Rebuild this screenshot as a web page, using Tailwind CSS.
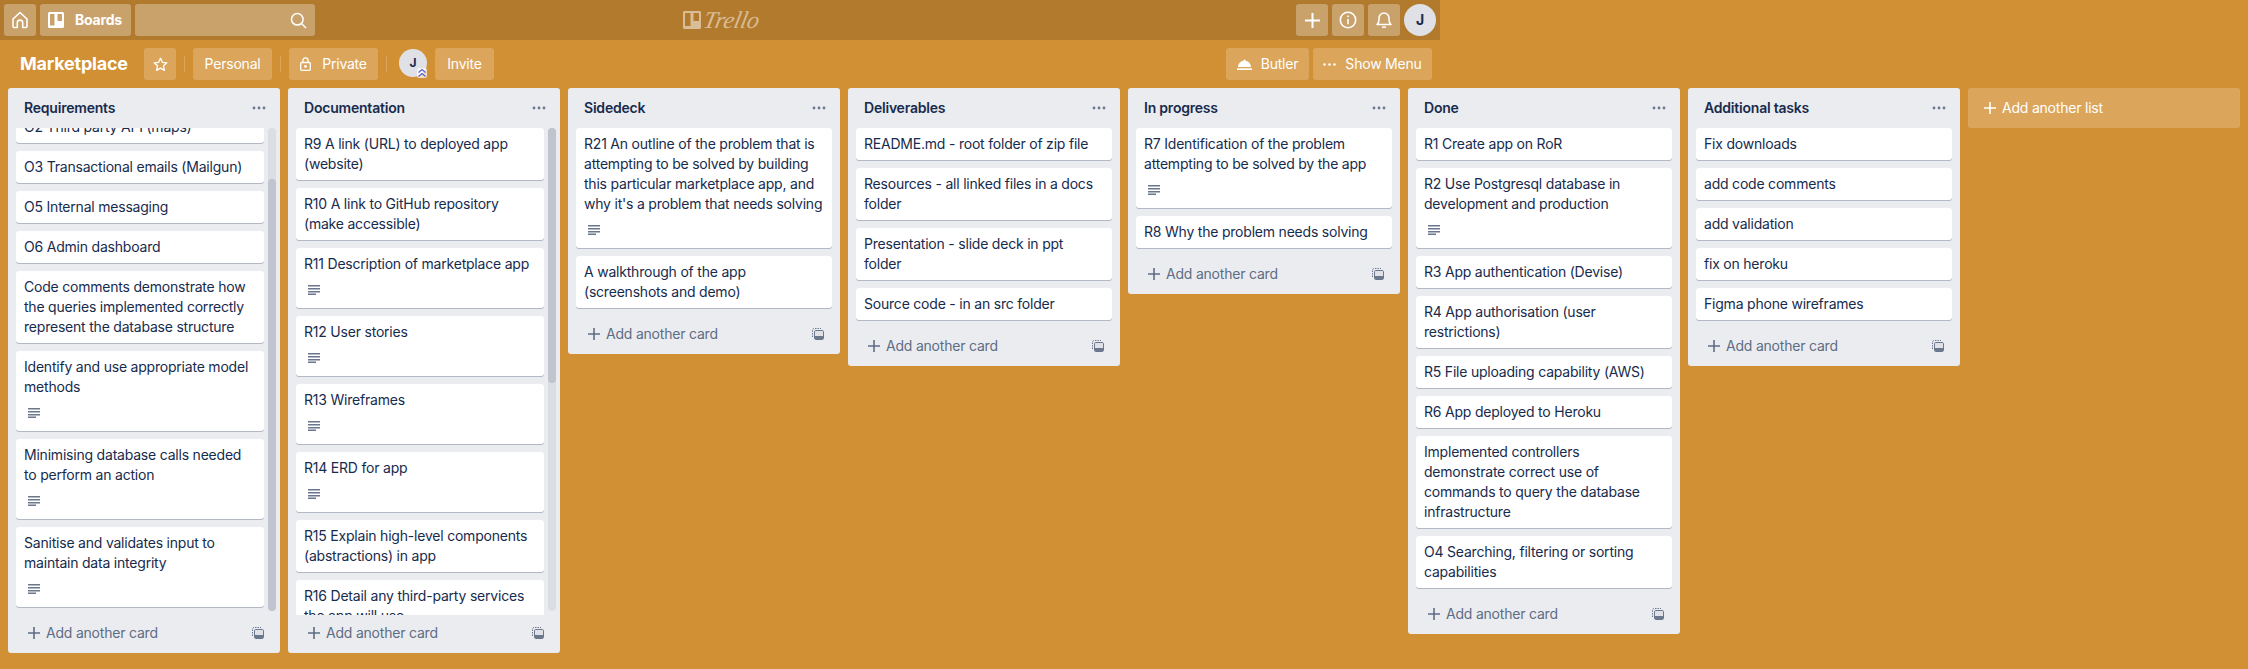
<!DOCTYPE html>
<html lang="en">
<head>
  <meta charset="UTF-8" />
  <title>Marketplace | Trello</title>
  <script src="https://cdn.jsdelivr.net/npm/@tailwindcss/browser@4"></script>
</head>
<body class="h-[669px] overflow-hidden bg-[#d29034] font-['Inter',sans-serif] text-sm leading-5 tracking-[-0.21px] text-[#172b4d]">

  <!-- shared icons -->
  <svg class="hidden">
    <symbol id="desc" viewBox="0 0 12 10"><path d="M0 .75h12M0 3.75h12M0 6.75h12M0 9.25h8" stroke="#6b778c" stroke-width="1.4" fill="none"/></symbol>
    <symbol id="dots" viewBox="0 0 14 4"><circle cx="2" cy="2" r="1.4" fill="#6b778c"/><circle cx="7" cy="2" r="1.4" fill="#6b778c"/><circle cx="12" cy="2" r="1.4" fill="#6b778c"/></symbol>
    <symbol id="plus" viewBox="0 0 12 12"><path d="M6 0v12M0 6h12" stroke="currentColor" stroke-width="1.6" fill="none"/></symbol>
    <symbol id="template" viewBox="0 0 12 12"><path d="M.5 9V2.2A1.7 1.7 0 0 1 2.2.5H9" stroke="#6b778c" stroke-width="1" stroke-dasharray="1.5 1" fill="none"/><rect x="2.5" y="2.5" width="9" height="9" rx="1.2" fill="#dfe1e6" stroke="#6b778c" stroke-width="1"/><rect x="3" y="8" width="8" height="3" fill="#6b778c"/></symbol>
  </svg>

  <header class="flex h-10 w-[1440px] items-center gap-1 bg-[#b27a2c] px-1 text-white">
    <a class="flex h-8 w-8 items-center justify-center rounded-[3px] bg-white/30">
      <svg class="h-[18px] w-[18px]" viewBox="0 0 18 18" fill="none" stroke="white" stroke-width="1.6" stroke-linejoin="round"><path d="M2 8 9 1.5 16 8v7.2a1.3 1.3 0 0 1-1.3 1.3h-3v-4.7a2.7 2.7 0 0 0-5.4 0v4.7h-3A1.3 1.3 0 0 1 2 15.2Z"/></svg>
    </a>
    <a class="flex h-8 w-[91px] items-center rounded-[3px] bg-white/30 pl-2 font-bold">
      <svg class="mr-[11px] h-4 w-4" viewBox="0 0 16 16"><path fill="white" fill-rule="evenodd" d="M1.5 0h13A1.5 1.5 0 0 1 16 1.500v13a1.500 1.500 0 0 1-1.500 1.500h-13A1.500 1.500 0 0 1 0 14.500v-13A1.500 1.500 0 0 1 1.500 0ZM2 2v11.500h4.500V2Zm7.500 0v7H14V2Z"/></svg>
      Boards
    </a>
    <div class="flex h-8 w-[180px] items-center justify-end rounded-[3px] bg-white/30 pr-[8px]">
      <svg class="h-[17px] w-[17px]" viewBox="0 0 17 17" fill="none" stroke="white" stroke-width="1.5"><circle cx="7.300" cy="7.300" r="5.800"/><path d="m11.500 11.500 4.500 4.500"/></svg>
    </div>
    <div class="ml-[364px] flex h-[18px] w-[74px] items-center gap-[3px] text-white/50">
      <svg class="h-[18px] w-[18px] shrink-0" viewBox="0 0 18 18"><path fill="currentColor" fill-rule="evenodd" d="M1.500 0h15A1.500 1.500 0 0 1 18 1.500v15a1.500 1.500 0 0 1-1.500 1.500h-15A1.500 1.500 0 0 1 0 16.500v-15A1.500 1.500 0 0 1 1.500 0ZM2 2v13h5.500V2Zm8.500 0v8H16V2Z"/></svg>
      <span class="-skew-x-12 font-['Liberation_Serif',serif] text-[24px] leading-[18px] italic">Trello</span>
    </div>
    <a class="ml-auto flex h-8 w-8 items-center justify-center rounded-[3px] bg-white/30">
      <svg class="h-[15px] w-[15px] text-white" viewBox="0 0 12 12"><use href="#plus"/></svg>
    </a>
    <a class="flex h-8 w-8 items-center justify-center rounded-[3px] bg-white/30">
      <svg class="h-[18px] w-[18px]" viewBox="0 0 18 18" fill="none" stroke="white" stroke-width="1.600"><circle cx="9" cy="9" r="7.700"/><path d="M9 8v5.200M9 4.500v1.800"/></svg>
    </a>
    <a class="flex h-8 w-8 items-center justify-center rounded-[3px] bg-white/30">
      <svg class="h-[18px] w-[16px]" viewBox="0 0 16 18" fill="none" stroke="white" stroke-width="1.500" stroke-linejoin="round"><path d="M1 13.500c1.300-1.200 2-2.300 2-4.500V7a5 5 0 0 1 10 0v2c0 2.200.7 3.300 2 4.500Z"/><path d="M6 16.200h4"/></svg>
    </a>
    <div class="flex h-8 w-8 items-center justify-center rounded-full bg-[#dfe1e6] font-bold text-[#172b4d]">J</div>
  </header>

  <div class="flex h-[48px] items-start pt-2 text-white">
    <div class="flex w-[1440px] items-center">
      <h1 class="ml-5 w-[124px] text-lg leading-8 font-bold">Marketplace</h1>
      <a class="flex h-8 w-8 items-center justify-center rounded-[3px] bg-white/20">
        <svg class="h-[15px] w-[15px]" viewBox="0 0 16 16" fill="none" stroke="white" stroke-width="1.400" stroke-linejoin="round"><path d="m8 1.300 2 4.400 4.800.5-3.600 3.200 1 4.800L8 11.800l-4.200 2.400 1-4.800L1.200 6.200 6 5.700Z"/></svg>
      </a>
      <span class="mx-2 h-4 w-px bg-white/20"></span>
      <a class="flex h-8 w-[79px] items-center justify-center rounded-[3px] bg-white/20">Personal</a>
      <span class="mx-2 h-4 w-px bg-white/20"></span>
      <a class="flex h-8 w-[89px] items-center justify-center gap-[11px] rounded-[3px] bg-white/20">
        <svg class="h-[14px] w-[11px]" viewBox="0 0 11 14" fill="none" stroke="white" stroke-width="1.300"><rect x=".7" y="5.500" width="9.600" height="7.800" rx="1"/><path d="M3 5.500V3.300a2.500 2.500 0 0 1 5 0v2.200"/><circle cx="5.500" cy="9.400" r=".8" fill="white"/></svg>
        Private
      </a>
      <span class="mx-2 h-4 w-px bg-white/20"></span>
      <div class="relative mt-[-2px] ml-1 flex h-7 w-7 items-center justify-center rounded-full bg-[#dfe1e6] text-xs font-bold text-[#172b4d]">
        J
        <svg class="absolute right-0 bottom-[-1px] h-[10px] w-[10px] rounded-[2px] bg-white/70" viewBox="0 0 10 10" fill="none" stroke="#5a61c9" stroke-width="1.200"><path d="m1.500 4.500 3.500-3 3.500 3M1.500 8.500l3.500-3 3.500 3"/></svg>
      </div>
      <a class="ml-2 flex h-8 w-[59px] items-center justify-center rounded-[3px] bg-white/20">Invite</a>
      <a class="ml-auto flex h-8 w-[83px] items-center justify-center gap-[9px] rounded-[3px] bg-white/20">
        <svg class="h-[14px] w-[15px]" viewBox="0 0 15 14" fill="white"><path d="M1 10a6.500 6.500 0 0 1 5.800-6.400V2.500h1.400v1.100A6.500 6.500 0 0 1 14 10Z"/><path d="M0 11.300h15V13H0Z"/></svg>
        Butler
      </a>
      <a class="mr-2 ml-1 flex h-8 w-[119px] items-center justify-center gap-[9px] rounded-[3px] bg-white/20">
        <svg class="h-[3px] w-[13px]" viewBox="0 0 13 3" fill="white"><circle cx="1.500" cy="1.500" r="1.200"/><circle cx="6.500" cy="1.500" r="1.200"/><circle cx="11.500" cy="1.500" r="1.200"/></svg>
        Show Menu
      </a>
    </div>
  </div>

  <main class="flex items-start gap-2 px-2">

    <section class="w-[272px] shrink-0 rounded-[3px] bg-[#ebecf0]">
      <div class="flex h-10 items-center justify-between pr-[14px] pl-4 font-semibold">
        <h2>Requirements</h2>
        <svg class="h-1 w-[14px]"><use href="#dots"/></svg>
      </div>
      <div class="relative h-[487px] overflow-hidden pl-2">
        <div class="mb-2 -mt-[17px] w-[248px] rounded-[3px] bg-white px-2 pt-[6px] pb-[6px] shadow-[0_1px_0_rgba(9,30,66,.25)]">O2 Third party API (maps)</div>
        <div class="mb-2 w-[248px] rounded-[3px] bg-white px-2 pt-[6px] pb-[6px] shadow-[0_1px_0_rgba(9,30,66,.25)]">O3 Transactional emails (Mailgun)</div>
        <div class="mb-2 w-[248px] rounded-[3px] bg-white px-2 pt-[6px] pb-[6px] shadow-[0_1px_0_rgba(9,30,66,.25)]">O5 Internal messaging</div>
        <div class="mb-2 w-[248px] rounded-[3px] bg-white px-2 pt-[6px] pb-[6px] shadow-[0_1px_0_rgba(9,30,66,.25)]">O6 Admin dashboard</div>
        <div class="mb-2 w-[248px] rounded-[3px] bg-white px-2 pt-[6px] pb-[6px] shadow-[0_1px_0_rgba(9,30,66,.25)]">Code comments demonstrate how the queries implemented correctly represent the database structure</div>
        <div class="mb-2 w-[248px] rounded-[3px] bg-white px-2 pt-[6px] shadow-[0_1px_0_rgba(9,30,66,.25)]">Identify and use appropriate model methods<div class="flex h-[34px] items-start pt-[11px] pl-1"><svg class="h-[10px] w-3"><use href="#desc"/></svg></div></div>
        <div class="mb-2 w-[248px] rounded-[3px] bg-white px-2 pt-[6px] shadow-[0_1px_0_rgba(9,30,66,.25)]">Minimising database calls needed to perform an action<div class="flex h-[34px] items-start pt-[11px] pl-1"><svg class="h-[10px] w-3"><use href="#desc"/></svg></div></div>
        <div class="mb-2 w-[248px] rounded-[3px] bg-white px-2 pt-[6px] shadow-[0_1px_0_rgba(9,30,66,.25)]">Sanitise and validates input to maintain data integrity<div class="flex h-[34px] items-start pt-[11px] pl-1"><svg class="h-[10px] w-3"><use href="#desc"/></svg></div></div>
        <div class="absolute top-0 right-1 h-[483px] w-2 rounded bg-[#dcdee5]">
          <div class="mt-[51px] h-[432px] rounded bg-[#bfc4ce]"></div>
        </div>
      </div>
      <div class="flex h-[38px] items-start justify-between pt-[8px] pr-4 pl-5 text-[#5e6c84]">
        <span class="flex items-center gap-[6px]"><svg class="h-3 w-3"><use href="#plus"/></svg>Add another card</span>
        <svg class="mt-1 h-3 w-3"><use href="#template"/></svg>
      </div>
    </section>

    <section class="w-[272px] shrink-0 rounded-[3px] bg-[#ebecf0]">
      <div class="flex h-10 items-center justify-between pr-[14px] pl-4 font-semibold">
        <h2>Documentation</h2>
        <svg class="h-1 w-[14px]"><use href="#dots"/></svg>
      </div>
      <div class="relative h-[487px] overflow-hidden pl-2">
        <div class="mb-2 w-[248px] rounded-[3px] bg-white px-2 pt-[6px] pb-[6px] shadow-[0_1px_0_rgba(9,30,66,.25)]">R9 A link (URL) to deployed app (website)</div>
        <div class="mb-2 w-[248px] rounded-[3px] bg-white px-2 pt-[6px] pb-[6px] shadow-[0_1px_0_rgba(9,30,66,.25)]">R10 A link to GitHub repository (make accessible)</div>
        <div class="mb-2 w-[248px] rounded-[3px] bg-white px-2 pt-[6px] shadow-[0_1px_0_rgba(9,30,66,.25)]">R11 Description of marketplace app<div class="flex h-[34px] items-start pt-[11px] pl-1"><svg class="h-[10px] w-3"><use href="#desc"/></svg></div></div>
        <div class="mb-2 w-[248px] rounded-[3px] bg-white px-2 pt-[6px] shadow-[0_1px_0_rgba(9,30,66,.25)]">R12 User stories<div class="flex h-[34px] items-start pt-[11px] pl-1"><svg class="h-[10px] w-3"><use href="#desc"/></svg></div></div>
        <div class="mb-2 w-[248px] rounded-[3px] bg-white px-2 pt-[6px] shadow-[0_1px_0_rgba(9,30,66,.25)]">R13 Wireframes<div class="flex h-[34px] items-start pt-[11px] pl-1"><svg class="h-[10px] w-3"><use href="#desc"/></svg></div></div>
        <div class="mb-2 w-[248px] rounded-[3px] bg-white px-2 pt-[6px] shadow-[0_1px_0_rgba(9,30,66,.25)]">R14 ERD for app<div class="flex h-[34px] items-start pt-[11px] pl-1"><svg class="h-[10px] w-3"><use href="#desc"/></svg></div></div>
        <div class="mb-2 w-[248px] rounded-[3px] bg-white px-2 pt-[6px] pb-[6px] shadow-[0_1px_0_rgba(9,30,66,.25)]">R15 Explain high-level components (abstractions) in app</div>
        <div class="mb-2 w-[248px] rounded-[3px] bg-white px-2 pt-[6px] pb-[6px] shadow-[0_1px_0_rgba(9,30,66,.25)]">R16 Detail any third-party services the app will use</div>
        <div class="absolute top-0 right-1 h-[483px] w-2 rounded bg-[#dcdee5]">
          <div class="h-[255px] rounded bg-[#bfc4ce]"></div>
        </div>
      </div>
      <div class="flex h-[38px] items-start justify-between pt-[8px] pr-4 pl-5 text-[#5e6c84]">
        <span class="flex items-center gap-[6px]"><svg class="h-3 w-3"><use href="#plus"/></svg>Add another card</span>
        <svg class="mt-1 h-3 w-3"><use href="#template"/></svg>
      </div>
    </section>

    <section class="w-[272px] shrink-0 rounded-[3px] bg-[#ebecf0]">
      <div class="flex h-10 items-center justify-between pr-[14px] pl-4 font-semibold">
        <h2>Sidedeck</h2>
        <svg class="h-1 w-[14px]"><use href="#dots"/></svg>
      </div>
      <div class="px-2">
        <div class="mb-2 rounded-[3px] bg-white px-2 pt-[6px] shadow-[0_1px_0_rgba(9,30,66,.25)]">R21 An outline of the problem that is attempting to be solved by building this particular marketplace app, and why it's a problem that needs solving<div class="flex h-[34px] items-start pt-[11px] pl-1"><svg class="h-[10px] w-3"><use href="#desc"/></svg></div></div>
        <div class="mb-2 rounded-[3px] bg-white px-2 pt-[6px] pb-[6px] shadow-[0_1px_0_rgba(9,30,66,.25)]">A walkthrough of the app (screenshots and demo)</div>
      </div>
      <div class="flex h-[38px] items-start justify-between pt-[8px] pr-4 pl-5 text-[#5e6c84]">
        <span class="flex items-center gap-[6px]"><svg class="h-3 w-3"><use href="#plus"/></svg>Add another card</span>
        <svg class="mt-1 h-3 w-3"><use href="#template"/></svg>
      </div>
    </section>

    <section class="w-[272px] shrink-0 rounded-[3px] bg-[#ebecf0]">
      <div class="flex h-10 items-center justify-between pr-[14px] pl-4 font-semibold">
        <h2>Deliverables</h2>
        <svg class="h-1 w-[14px]"><use href="#dots"/></svg>
      </div>
      <div class="px-2">
        <div class="mb-2 rounded-[3px] bg-white px-2 pt-[6px] pb-[6px] shadow-[0_1px_0_rgba(9,30,66,.25)]">README.md - root folder of zip file</div>
        <div class="mb-2 rounded-[3px] bg-white px-2 pt-[6px] pb-[6px] shadow-[0_1px_0_rgba(9,30,66,.25)]">Resources - all linked files in a docs folder</div>
        <div class="mb-2 rounded-[3px] bg-white px-2 pt-[6px] pb-[6px] shadow-[0_1px_0_rgba(9,30,66,.25)]">Presentation - slide deck in ppt folder</div>
        <div class="mb-2 rounded-[3px] bg-white px-2 pt-[6px] pb-[6px] shadow-[0_1px_0_rgba(9,30,66,.25)]">Source code - in an src folder</div>
      </div>
      <div class="flex h-[38px] items-start justify-between pt-[8px] pr-4 pl-5 text-[#5e6c84]">
        <span class="flex items-center gap-[6px]"><svg class="h-3 w-3"><use href="#plus"/></svg>Add another card</span>
        <svg class="mt-1 h-3 w-3"><use href="#template"/></svg>
      </div>
    </section>

    <section class="w-[272px] shrink-0 rounded-[3px] bg-[#ebecf0]">
      <div class="flex h-10 items-center justify-between pr-[14px] pl-4 font-semibold">
        <h2>In progress</h2>
        <svg class="h-1 w-[14px]"><use href="#dots"/></svg>
      </div>
      <div class="px-2">
        <div class="mb-2 rounded-[3px] bg-white px-2 pt-[6px] shadow-[0_1px_0_rgba(9,30,66,.25)]">R7 Identification of the problem attempting to be solved by the app<div class="flex h-[34px] items-start pt-[11px] pl-1"><svg class="h-[10px] w-3"><use href="#desc"/></svg></div></div>
        <div class="mb-2 rounded-[3px] bg-white px-2 pt-[6px] pb-[6px] shadow-[0_1px_0_rgba(9,30,66,.25)]">R8 Why the problem needs solving</div>
      </div>
      <div class="flex h-[38px] items-start justify-between pt-[8px] pr-4 pl-5 text-[#5e6c84]">
        <span class="flex items-center gap-[6px]"><svg class="h-3 w-3"><use href="#plus"/></svg>Add another card</span>
        <svg class="mt-1 h-3 w-3"><use href="#template"/></svg>
      </div>
    </section>

    <section class="w-[272px] shrink-0 rounded-[3px] bg-[#ebecf0]">
      <div class="flex h-10 items-center justify-between pr-[14px] pl-4 font-semibold">
        <h2>Done</h2>
        <svg class="h-1 w-[14px]"><use href="#dots"/></svg>
      </div>
      <div class="px-2">
        <div class="mb-2 rounded-[3px] bg-white px-2 pt-[6px] pb-[6px] shadow-[0_1px_0_rgba(9,30,66,.25)]">R1 Create app on RoR</div>
        <div class="mb-2 rounded-[3px] bg-white px-2 pt-[6px] shadow-[0_1px_0_rgba(9,30,66,.25)]">R2 Use Postgresql database in development and production<div class="flex h-[34px] items-start pt-[11px] pl-1"><svg class="h-[10px] w-3"><use href="#desc"/></svg></div></div>
        <div class="mb-2 rounded-[3px] bg-white px-2 pt-[6px] pb-[6px] shadow-[0_1px_0_rgba(9,30,66,.25)]">R3 App authentication (Devise)</div>
        <div class="mb-2 rounded-[3px] bg-white px-2 pt-[6px] pb-[6px] shadow-[0_1px_0_rgba(9,30,66,.25)]">R4 App authorisation (user restrictions)</div>
        <div class="mb-2 rounded-[3px] bg-white px-2 pt-[6px] pb-[6px] shadow-[0_1px_0_rgba(9,30,66,.25)]">R5 File uploading capability (AWS)</div>
        <div class="mb-2 rounded-[3px] bg-white px-2 pt-[6px] pb-[6px] shadow-[0_1px_0_rgba(9,30,66,.25)]">R6 App deployed to Heroku</div>
        <div class="mb-2 rounded-[3px] bg-white px-2 pt-[6px] pb-[6px] shadow-[0_1px_0_rgba(9,30,66,.25)]">Implemented controllers demonstrate correct use of commands to query the database infrastructure</div>
        <div class="mb-2 rounded-[3px] bg-white px-2 pt-[6px] pb-[6px] shadow-[0_1px_0_rgba(9,30,66,.25)]">O4 Searching, filtering or sorting capabilities</div>
      </div>
      <div class="flex h-[38px] items-start justify-between pt-[8px] pr-4 pl-5 text-[#5e6c84]">
        <span class="flex items-center gap-[6px]"><svg class="h-3 w-3"><use href="#plus"/></svg>Add another card</span>
        <svg class="mt-1 h-3 w-3"><use href="#template"/></svg>
      </div>
    </section>

    <section class="w-[272px] shrink-0 rounded-[3px] bg-[#ebecf0]">
      <div class="flex h-10 items-center justify-between pr-[14px] pl-4 font-semibold">
        <h2>Additional tasks</h2>
        <svg class="h-1 w-[14px]"><use href="#dots"/></svg>
      </div>
      <div class="px-2">
        <div class="mb-2 rounded-[3px] bg-white px-2 pt-[6px] pb-[6px] shadow-[0_1px_0_rgba(9,30,66,.25)]">Fix downloads</div>
        <div class="mb-2 rounded-[3px] bg-white px-2 pt-[6px] pb-[6px] shadow-[0_1px_0_rgba(9,30,66,.25)]">add code comments</div>
        <div class="mb-2 rounded-[3px] bg-white px-2 pt-[6px] pb-[6px] shadow-[0_1px_0_rgba(9,30,66,.25)]">add validation</div>
        <div class="mb-2 rounded-[3px] bg-white px-2 pt-[6px] pb-[6px] shadow-[0_1px_0_rgba(9,30,66,.25)]">fix on heroku</div>
        <div class="mb-2 rounded-[3px] bg-white px-2 pt-[6px] pb-[6px] shadow-[0_1px_0_rgba(9,30,66,.25)]">Figma phone wireframes</div>
      </div>
      <div class="flex h-[38px] items-start justify-between pt-[8px] pr-4 pl-5 text-[#5e6c84]">
        <span class="flex items-center gap-[6px]"><svg class="h-3 w-3"><use href="#plus"/></svg>Add another card</span>
        <svg class="mt-1 h-3 w-3"><use href="#template"/></svg>
      </div>
    </section>

    <a class="flex h-10 w-[272px] shrink-0 items-center gap-[6px] rounded-[3px] bg-white/20 pl-4 text-white">
      <svg class="h-3 w-3"><use href="#plus"/></svg>Add another list
    </a>
  </main>
</body>
</html>
